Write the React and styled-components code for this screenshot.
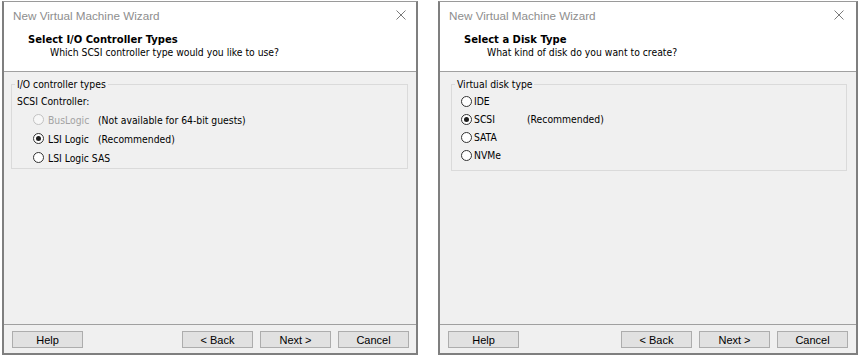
import React from "react";
import styled, { createGlobalStyle } from "styled-components";

const Global = createGlobalStyle`
  html, body { margin: 0; padding: 0; background: #ffffff; }
  body { width: 860px; height: 357px; overflow: hidden; }
`;

const UI = `"DejaVu Sans Condensed", "DejaVu Sans", sans-serif`;
const UI_BOLD = `"DejaVu Sans", sans-serif`;
const SEGOE = `"Liberation Sans", Arial, sans-serif`;

const Page = styled.div`
  display: flex;
  gap: 20px;
  padding: 1px 0 0 2px;
  box-sizing: border-box;
  width: 860px;
  height: 357px;
`;

const Window = styled.section`
  width: ${(p) => p.$w}px;
  height: 354px;
  box-sizing: border-box;
  border: 2px solid #7f7f7f;
  border-top: 1px solid #9a9a9a;
  background: #f0f0f0;
  display: flex;
  flex-direction: column;
`;

const TitleBar = styled.div`
  height: 26px;
  flex: none;
  background: #ffffff;
  display: flex;
  align-items: center;
  justify-content: space-between;
  padding: 0 ${(p) => p.$right}px 0 ${(p) => p.$left}px;
  font-family: ${SEGOE};
  font-size: 11.7px;
  color: #8e8e8e;
`;

const CloseIcon = () => (
  <svg width="10" height="10" viewBox="0 0 10 10">
    <path d="M0.5 0.5 L9.5 9.5 M9.5 0.5 L0.5 9.5" stroke="#7a7a7a" strokeWidth="1" fill="none" />
  </svg>
);

const Header = styled.div`
  height: 44px;
  flex: none;
  box-sizing: border-box;
  background: #ffffff;
  border-bottom: 1px solid #a0a0a0;
  padding: 6px 0 0 24px;
  font-family: ${UI};
  font-size: 10.3px;
  line-height: 12px;
  color: #000;
`;

const HeaderTitle = styled.div`
  font-family: ${UI_BOLD};
  font-size: 10px;
  font-weight: bold;
`;

const HeaderSub = styled.div`
  padding-left: ${(p) => p.$indent}px;
`;

const Body = styled.div`
  flex: 1;
  padding: 6px ${(p) => p.$right}px 0 ${(p) => p.$left}px;
`;

const Group = styled.fieldset`
  margin: 0;
  padding: ${(p) => p.$top}px 0 ${(p) => p.$bottom}px 3px;
  border: 1px solid #dadada;
  font-family: ${UI};
  font-size: 10.3px;
  line-height: 12px;
  color: #000;
`;

const Legend = styled.legend`
  padding: 0 2px;
  line-height: 12px;
`;

const Row = styled.div`
  display: flex;
  align-items: center;
  height: ${(p) => p.$h}px;
  padding-left: ${(p) => p.$indent}px;
`;

const Radio = styled.span`
  width: 11px;
  height: 11px;
  box-sizing: border-box;
  border-radius: 50%;
  border: 1px solid ${(p) => (p.$disabled ? "#c2c2c2" : "#333333")};
  background: ${(p) => (p.$disabled ? "#f7f7f7" : "#ffffff")};
  display: flex;
  align-items: center;
  justify-content: center;
  flex: none;
  margin-right: ${(p) => p.$gap}px;
  &::after {
    content: "";
    display: ${(p) => (p.$checked ? "block" : "none")};
    width: 5px;
    height: 5px;
    border-radius: 50%;
    background: #1e1e1e;
  }
`;

const Label = styled.span`
  min-width: ${(p) => p.$w}px;
  color: ${(p) => (p.$disabled ? "#a3a3a3" : "#000000")};
`;

const Footer = styled.div`
  flex: none;
  height: 29px;
  box-sizing: border-box;
  border-top: 1px solid #a0a0a0;
  padding: 6px ${(p) => p.$right}px 0 8px;
  display: flex;
  gap: 7px;
`;

const Button = styled.button`
  width: 71px;
  height: 17px;
  box-sizing: border-box;
  padding: 0;
  border: 1px solid #adadad;
  background: #e1e1e1;
  font-family: ${SEGOE};
  font-size: 11px;
  color: #000;
  margin-left: ${(p) => (p.$push ? "auto" : "0")};
`;

function Wizard({ w, title, subtitle, subIndent, titleRight, bodyLeft, bodyRight, footRight, children }) {
  return (
    <Window $w={w}>
      <TitleBar $left={9} $right={titleRight}>
        <span>New Virtual Machine Wizard</span>
        <CloseIcon />
      </TitleBar>
      <Header>
        <HeaderTitle>{title}</HeaderTitle>
        <HeaderSub $indent={subIndent}>{subtitle}</HeaderSub>
      </Header>
      <Body $left={bodyLeft} $right={bodyRight}>{children}</Body>
      <Footer $right={footRight}>
        <Button>Help</Button>
        <Button $push>&lt; Back</Button>
        <Button>Next &gt;</Button>
        <Button>Cancel</Button>
      </Footer>
    </Window>
  );
}

const scsiOptions = [
  { label: "BusLogic", note: "(Not available for 64-bit guests)", disabled: true },
  { label: "LSI Logic", note: "(Recommended)", checked: true },
  { label: "LSI Logic SAS" },
];

const diskOptions = [
  { label: "IDE" },
  { label: "SCSI", note: "(Recommended)", checked: true },
  { label: "SATA" },
  { label: "NVMe" },
];

export default function App() {
  return (
    <>
      <Global />
      <Page>
        <Wizard
          w={416}
          title="Select I/O Controller Types"
          subtitle="Which SCSI controller type would you like to use?"
          subIndent={22}
          titleRight={10}
          bodyLeft={7}
          bodyRight={8}
          footRight={7}
        >
          <Group $top={1} $bottom={1}>
            <Legend>I/O controller types</Legend>
            <Row $h={19} $indent={2}>SCSI Controller:</Row>
            {scsiOptions.map((o) => (
              <Row key={o.label} $h={19} $indent={18}>
                <Radio $checked={o.checked} $disabled={o.disabled} $gap={4} />
                <Label $w={50} $disabled={o.disabled}>{o.label}</Label>
                {o.note && <span>{o.note}</span>}
              </Row>
            ))}
          </Group>
        </Wizard>
        <Wizard
          w={420}
          title="Select a Disk Type"
          subtitle="What kind of disk do you want to create?"
          subIndent={23}
          titleRight={12}
          bodyLeft={11}
          bodyRight={9}
          footRight={8}
        >
          <Group $top={2} $bottom={6}>
            <Legend>Virtual disk type</Legend>
            {diskOptions.map((o) => (
              <Row key={o.label} $h={18} $indent={6}>
                <Radio $checked={o.checked} $gap={2} />
                <Label $w={53}>{o.label}</Label>
                {o.note && <span>{o.note}</span>}
              </Row>
            ))}
          </Group>
        </Wizard>
      </Page>
    </>
  );
}
